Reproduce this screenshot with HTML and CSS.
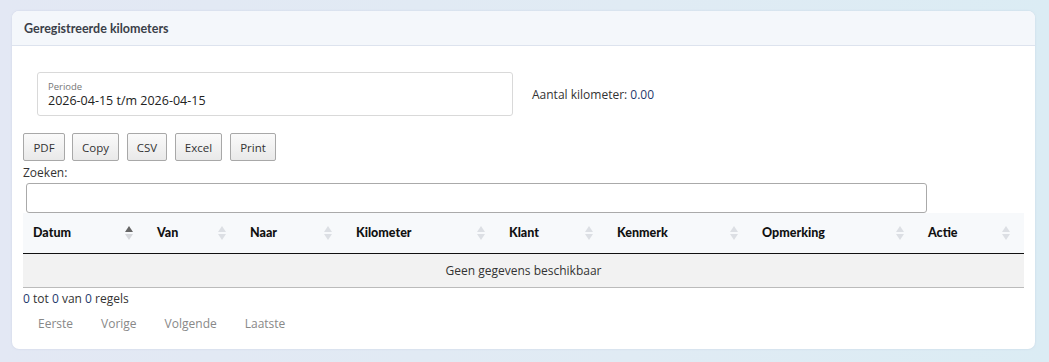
FILE: index.html
```html
<!DOCTYPE html>
<html>
<head>
<meta charset="utf-8">
<link rel="stylesheet" href="styles.css">
</head>
<body>
<div class="card">
  <div class="card-header">Geregistreerde kilometers</div>
  <div class="card-body">
    <div class="filter-row">
      <div class="period-box">
        <div class="period-label">Periode</div>
        <div class="period-value">2026-04-15 t/m 2026-04-15</div>
      </div>
      <div class="total">Aantal kilometer: <span class="num">0.00</span></div>
    </div>
    <div class="buttons">
      <button class="btn">PDF</button>
      <button class="btn">Copy</button>
      <button class="btn">CSV</button>
      <button class="btn">Excel</button>
      <button class="btn">Print</button>
    </div>
    <div class="search">
      <label class="search-label">Zoeken:</label>
      <div class="search-input"></div>
    </div>
    <table class="grid">
      <thead>
        <tr>
          <th class="c1"><span>Datum</span><i class="sort active"></i></th>
          <th class="c2"><span>Van</span><i class="sort"></i></th>
          <th class="c3"><span>Naar</span><i class="sort"></i></th>
          <th class="c4"><span>Kilometer</span><i class="sort"></i></th>
          <th class="c5"><span>Klant</span><i class="sort"></i></th>
          <th class="c6"><span>Kenmerk</span><i class="sort"></i></th>
          <th class="c7"><span>Opmerking</span><i class="sort"></i></th>
          <th class="c8"><span>Actie</span><i class="sort"></i></th>
        </tr>
      </thead>
      <tbody>
        <tr><td colspan="8" class="empty">Geen gegevens beschikbaar</td></tr>
      </tbody>
    </table>
    <div class="info"><span class="num">0</span> tot <span class="num">0</span> van <span class="num">0</span> regels</div>
    <div class="pager">
      <span class="pg">Eerste</span>
      <span class="pg">Vorige</span>
      <span class="pg">Volgende</span>
      <span class="pg">Laatste</span>
    </div>
  </div>
</div>
</body>
</html>
```

FILE: styles.css
```css
html, body { margin: 0; padding: 0; }
body {
  width: 1049px;
  height: 362px;
  background: linear-gradient(90deg, #e3e8f4 0%, #e0ebf4 60%, #dbecf4 100%);
  font-family: "Open Sans", "Noto Sans", sans-serif;
  color: #333;
  padding: 11px 14px 0 12px;
  box-sizing: border-box;
  overflow: hidden;
}
.card {
  background: #fff;
  border-radius: 7px;
  height: 338px;
  box-shadow: 0 0 2px rgba(160, 170, 200, 0.4);
  overflow: hidden;
}
.card-header {
  height: 33px;
  background: #f4f7fb;
  border-bottom: 1px solid #dde3ee;
  box-sizing: content-box;
  padding-left: 12px;
  display: flex;
  align-items: center;
  font-family: "Lato", "Noto Sans", sans-serif;
  font-weight: 700;
  font-size: 12.5px;
  color: #3b3f49;
  padding-top: 1px;
}
.card-body {
  padding: 0 11px 0 11px;
}
.filter-row {
  display: flex;
  align-items: center;
  padding-top: 26px;
  padding-left: 14px;
}
.period-box {
  width: 464px;
  height: 42px;
  border: 1px solid #d9d9d9;
  border-radius: 3px;
  box-sizing: content-box;
  padding-left: 10px;
  display: flex;
  flex-direction: column;
  justify-content: center;
}
.period-label {
  font-size: 9.5px;
  color: #777;
  line-height: 12px;
  margin-top: 2px;
}
.period-value {
  font-size: 12.5px;
  color: #222;
  line-height: 16px;
}
.total {
  margin-left: 19px;
  font-size: 12px;
  color: #333;
}
.num { color: #1f3a6d; }
.buttons {
  display: flex;
  margin-top: 17px;
  height: 28px;
}
.btn {
  font-family: "Open Sans", "Noto Sans", sans-serif;
  font-size: 11.5px;
  color: #333;
  height: 28px;
  padding: 0;
  border: 1px solid #a8a8a8;
  border-radius: 2px;
  background: linear-gradient(#fafafa, #e9e9e9);
  margin: 0 0 0 8px;
  box-sizing: border-box;
  text-align: center;
}
.btn:nth-child(1) { width: 42px; margin-left: 0; }
.btn:nth-child(2) { width: 47px; margin-left: 7px; }
.btn:nth-child(3) { width: 40px; }
.btn:nth-child(4) { width: 47px; }
.btn:nth-child(5) { width: 46px; }
.search {
  display: flex;
  flex-direction: column;
}
.search-label {
  font-size: 12px;
  line-height: 16px;
  margin-top: 4px;
  color: #333;
}
.search-input {
  margin-left: 3px;
  margin-top: 2px;
  width: 899px;
  height: 28px;
  border: 1px solid #aaa;
  border-radius: 3px;
}
.grid {
  width: 1001px;
  border-collapse: collapse;
  table-layout: fixed;
  margin-top: 0;
}
.grid thead tr {
  background: #f7f9fb;
  height: 40px;
}
.grid th {
  text-align: left;
  font-family: "Lato", "Noto Sans", sans-serif;
  font-weight: 900;
  font-size: 12.5px;
  color: #111;
  padding: 0 0 0 10px;
  border-bottom: 1px solid #111;
  position: relative;
  height: 40px;
  box-sizing: border-box;
}
.c1 { width: 124px; }
.c2 { width: 93px; }
.c3 { width: 106px; }
.c4 { width: 153px; }
.c5 { width: 108px; }
.c6 { width: 145px; }
.c7 { width: 166px; }
.c8 { width: 106px; }
.sort {
  position: absolute;
  right: 14px;
  top: 13px;
  width: 8px;
  height: 14px;
}
.sort::before, .sort::after {
  content: "";
  position: absolute;
  left: 0;
  border-left: 4px solid transparent;
  border-right: 4px solid transparent;
}
.sort::before {
  top: 0;
  border-bottom: 6px solid #dcdfe4;
}
.sort::after {
  bottom: 0;
  border-top: 6px solid #dcdfe4;
}
.sort.active::before { border-bottom-color: #666; }
.sort.active::after { border-top-color: #d6d8dc; }
.empty {
  background: #f2f2f2;
  text-align: center;
  font-size: 12px;
  color: #333;
  height: 34px;
  padding: 0;
  border-bottom: 1px solid #bbb;
  box-sizing: border-box;
}
.info {
  font-size: 12px;
  line-height: 16px;
  margin-top: 3px;
}
.pager {
  display: flex;
  margin-top: 5px;
  padding-left: 3px;
}
.pg {
  font-size: 12px;
  color: #888;
  padding: 3px 12px;
  margin-right: 4px;
}
.pg:nth-child(3) { margin-right: 4px; }
```
